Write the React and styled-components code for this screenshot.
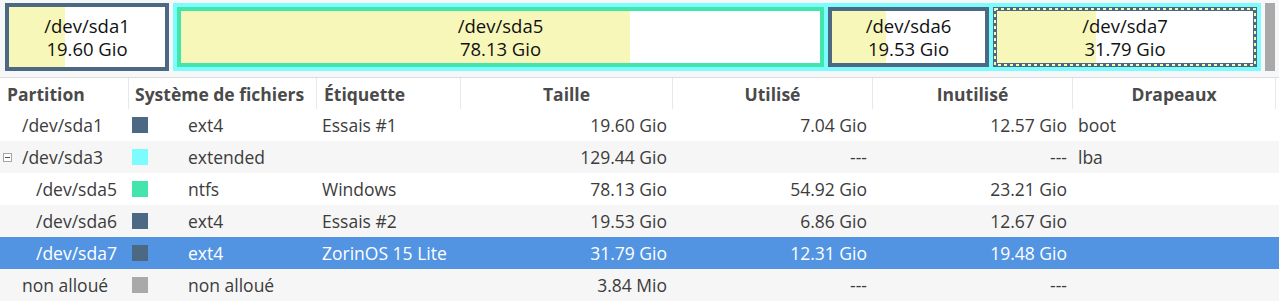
import React from 'react'
import styled, {createGlobalStyle} from 'styled-components'

const colors = {
    ext4: '#4b6983',
    extended: '#7dfcfe',
    ntfs: '#42e5ac',
    unallocated: '#a9a9a9',
    used: '#f8f7ba',
};

const rows = [
    {name: '/dev/sda1', level: 0, fs: 'ext4', fsLabel: 'ext4', label: 'Essais #1', size: '19.60 Gio', used: '7.04 Gio', unused: '12.57 Gio', flags: 'boot'},
    {name: '/dev/sda3', level: 0, expander: true, fs: 'extended', fsLabel: 'extended', label: '', size: '129.44 Gio', used: '---', unused: '---', flags: 'lba'},
    {name: '/dev/sda5', level: 1, fs: 'ntfs', fsLabel: 'ntfs', label: 'Windows', size: '78.13 Gio', used: '54.92 Gio', unused: '23.21 Gio', flags: ''},
    {name: '/dev/sda6', level: 1, fs: 'ext4', fsLabel: 'ext4', label: 'Essais #2', size: '19.53 Gio', used: '6.86 Gio', unused: '12.67 Gio', flags: ''},
    {name: '/dev/sda7', level: 1, fs: 'ext4', fsLabel: 'ext4', label: 'ZorinOS 15 Lite', size: '31.79 Gio', used: '12.31 Gio', unused: '19.48 Gio', flags: '', selected: true},
    {name: 'non alloué', level: 0, fs: 'unallocated', fsLabel: 'non alloué', label: '', size: '3.84 Mio', used: '---', unused: '---', flags: ''},
];

const columns = '128px 188px 144px 212px 200px 200px 1fr';

function Partition({name, size, width, color, used, selected}) {
    return (
        <PartBox $width={width} $color={color} $used={used}>
            {selected && (
                <Dashes>
                    <rect x="2" y="2" width="calc(100% - 4px)" height="calc(100% - 4px)" fill="none" stroke={colors.used} strokeWidth="2" strokeDasharray="3 3" />
                </Dashes>
            )}
            <span>{name}</span>
            <span>{size}</span>
        </PartBox>
    )
}

function App() {
    return (
        <Page>
            <GlobalStyle />
            <DiskMap>
                <Partition name="/dev/sda1" size="19.60 Gio" width={164} color={colors.ext4} used={7.04 / 19.60} />
                <Extended>
                    <Partition name="/dev/sda5" size="78.13 Gio" width={647} color={colors.ntfs} used={54.92 / 78.13} />
                    <Partition name="/dev/sda6" size="19.53 Gio" width={161} color={colors.ext4} used={6.86 / 19.53} />
                    <Partition name="/dev/sda7" size="31.79 Gio" width={264} color={colors.ext4} used={12.31 / 31.79} selected />
                </Extended>
                <Unallocated />
            </DiskMap>
            <Table>
                <HeaderRow>
                    <HeadCell $pad={7}>Partition</HeadCell>
                    <HeadCell $pad={6}>Système de fichiers</HeadCell>
                    <HeadCell $pad={7}>Étiquette</HeadCell>
                    <HeadCell $center>Taille</HeadCell>
                    <HeadCell $center>Utilisé</HeadCell>
                    <HeadCell $center>Inutilisé</HeadCell>
                    <HeadCell $center $last>Drapeaux</HeadCell>
                </HeaderRow>
                {rows.map((r, i) => (
                    <Row key={r.name} $striped={i % 2 === 1} $selected={r.selected}>
                        <NameCell $level={r.level}>
                            <ExpanderSlot>{r.expander && <Expander />}</ExpanderSlot>
                            {r.name}
                        </NameCell>
                        <FsCell>
                            <Swatch $color={colors[r.fs]} />
                            {r.fsLabel}
                        </FsCell>
                        <Cell>{r.label}</Cell>
                        <NumCell>{r.size}</NumCell>
                        <NumCell>{r.used}</NumCell>
                        <NumCell>{r.unused}</NumCell>
                        <Cell>{r.flags}</Cell>
                    </Row>
                ))}
            </Table>
        </Page>
    )
}

const GlobalStyle = createGlobalStyle`
    body {
        margin: 0;
        background: #ffffff;
        font-family: "Open Sans", "Noto Sans", sans-serif;
    }
`;

const Page = styled.div`
    width: 1279px;
    height: 308px;
    overflow: hidden;
    background: #ffffff;
`;

const DiskMap = styled.div`
    display: flex;
    gap: 4px;
    padding: 3px 0 6px 5px;
    height: 78px;
    box-sizing: border-box;
    background: #f6f7f8;
    border-bottom: 1px solid #dcdcdc;
`;

const PartBox = styled.div`
    position: relative;
    width: ${p => p.$width}px;
    flex: none;
    box-sizing: border-box;
    border: 4px solid ${p => p.$color};
    background: linear-gradient(to right, ${colors.used} ${p => (p.$used * 100).toFixed(1)}%, #ffffff ${p => (p.$used * 100).toFixed(1)}%);
    display: flex;
    flex-direction: column;
    align-items: center;
    justify-content: center;
    color: #111111;
    font-size: 18.5px;
    line-height: 23px;
`;

const Dashes = styled.svg`
    position: absolute;
    inset: -4px;
    width: calc(100% + 8px);
    height: calc(100% + 8px);
    pointer-events: none;
`;

const Extended = styled.div`
    display: flex;
    gap: 4px;
    width: 1088px;
    flex: none;
    box-sizing: border-box;
    padding: 4px;
    background: ${colors.extended};
`;

const Unallocated = styled.div`
    width: 10px;
    flex: none;
    background: ${colors.unallocated};
`;

const Table = styled.div`
    color: #3c3c3c;
    font-size: 17.5px;
`;

const HeaderRow = styled.div`
    display: grid;
    grid-template-columns: ${columns};
    height: 31px;
    align-items: stretch;
    background: #ffffff;
`;

const HeadCell = styled.div`
    display: flex;
    align-items: center;
    justify-content: ${p => (p.$center ? 'center' : 'flex-start')};
    padding-left: ${p => p.$pad || 0}px;
    border-left: 1px solid #e8e8e8;
    border-right: ${p => (p.$last ? '1px solid #e8e8e8' : 'none')};
    margin-right: ${p => (p.$last ? '3px' : '0')};
    font-weight: 700;
    color: #4a4a4a;
    white-space: nowrap;
    overflow: hidden;

    &:first-child {
        border-left: none;
    }
`;

const Row = styled.div`
    display: grid;
    grid-template-columns: ${columns};
    height: 32px;
    align-items: center;
    background: ${p => (p.$selected ? '#5294e2' : p.$striped ? '#f6f6f6' : '#ffffff')};
    color: ${p => (p.$selected ? '#ffffff' : 'inherit')};
`;

const Cell = styled.div`
    padding-left: 6px;
    white-space: nowrap;
    overflow: hidden;
`;

const NameCell = styled.div`
    display: flex;
    align-items: center;
    padding-left: ${p => 3 + p.$level * 14}px;
    white-space: nowrap;
`;

const ExpanderSlot = styled.span`
    width: 19px;
    flex: none;
    display: flex;
    align-items: center;
`;

const Expander = styled.span`
    position: relative;
    width: 9px;
    height: 9px;
    box-sizing: border-box;
    border: 1px solid #a6a6a6;
    background: #ffffff;

    &::after {
        content: '';
        position: absolute;
        left: 1px;
        right: 1px;
        top: 3px;
        height: 1px;
        background: #555555;
    }
`;

const FsCell = styled.div`
    display: flex;
    align-items: center;
    gap: 40px;
    padding-left: 4px;
    white-space: nowrap;
`;

const Swatch = styled.span`
    width: 16px;
    height: 16px;
    flex: none;
    background: ${p => p.$color};
`;

const NumCell = styled.div`
    text-align: right;
    padding-right: 5px;
    white-space: nowrap;
`;

export default App
